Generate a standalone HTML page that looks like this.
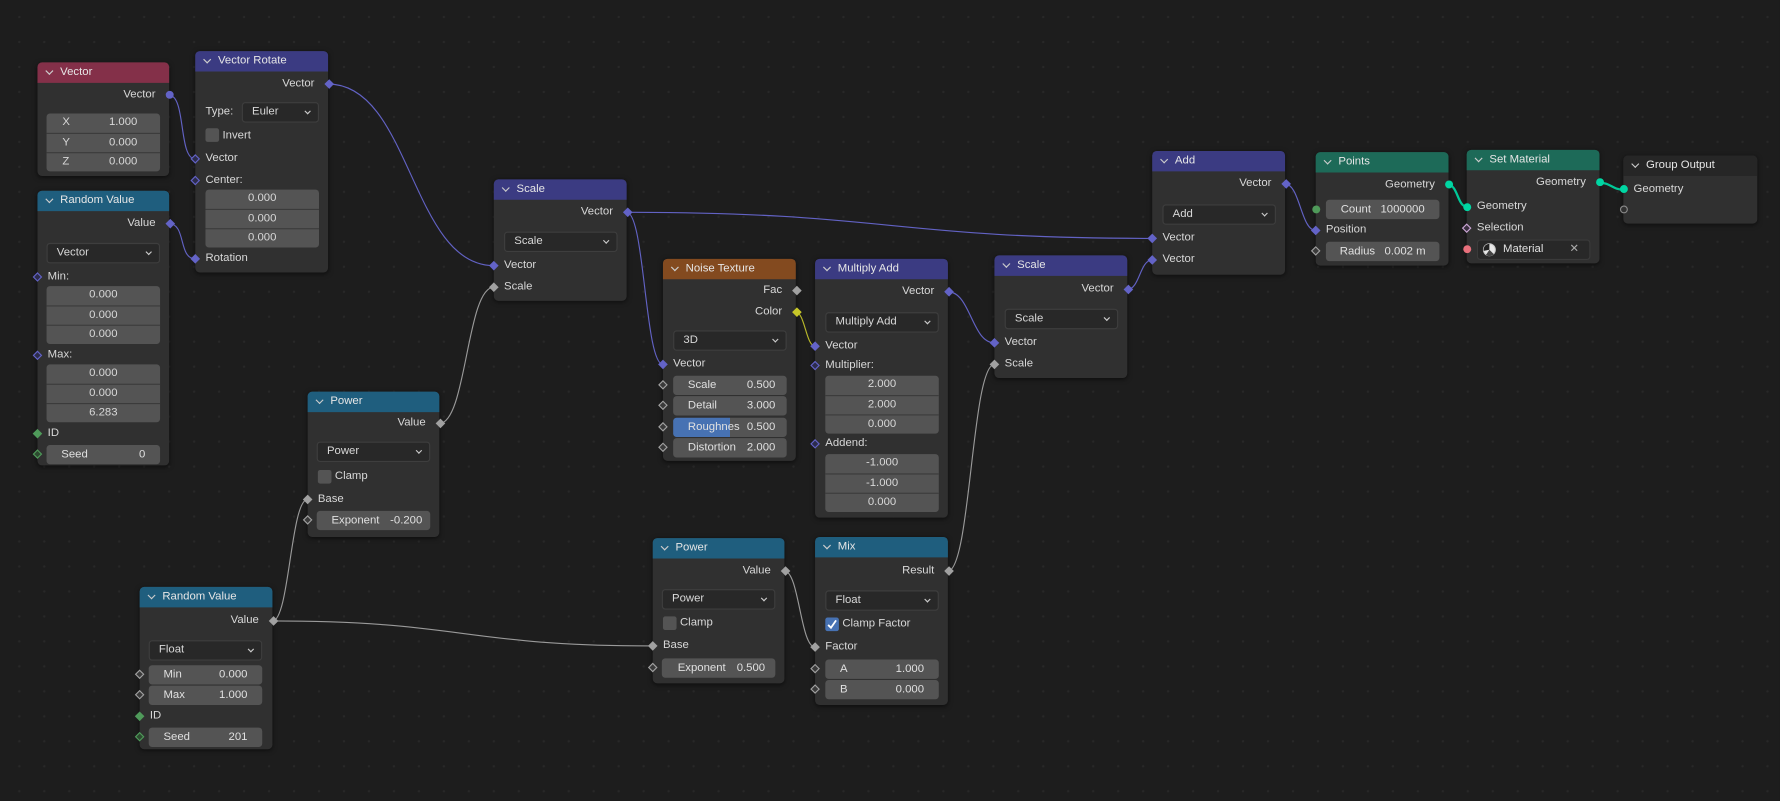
<!DOCTYPE html>
<html><head><meta charset="utf-8"><style>
html,body{margin:0;padding:0;width:1780px;height:801px;overflow:hidden;background:#1d1d1d}
#w{position:absolute;left:0;top:0;width:1568px;height:706px;transform:scale(1.13520);transform-origin:0 0;
background-color:#1d1d1d;background-image:radial-gradient(circle,#282828 0.9px,transparent 1.2px);background-size:22px 22px;background-position:6px 4px;
font-family:"Liberation Sans","DejaVu Sans",sans-serif;font-size:10px;color:#d8d8d8}
svg.l{position:absolute;left:0;top:0}
.n{position:absolute;background:#303030;border-radius:4px;box-shadow:0 1px 4px rgba(0,0,0,.55)}
.h{position:absolute;left:0;top:0;right:0;height:18px;border-radius:4px 4px 0 0;line-height:18px;padding-left:20px;color:#e6e6e6;font-size:10px}
.h:before{content:"";position:absolute;left:8px;top:5px;width:4px;height:4px;border-right:1.1px solid #ccc;border-bottom:1.1px solid #ccc;transform:rotate(45deg)}
.t{position:absolute;height:14px;line-height:14px;white-space:nowrap}
.r{right:12px}.lf{left:9px}
.f{position:absolute;left:8px;width:100px;height:17px;background:#545454;border-radius:3px;line-height:17px;color:#e0e0e0;overflow:hidden;white-space:nowrap}
.f .a{position:absolute;left:13px}.f .b{position:absolute;right:13px}
.fs{position:absolute;left:8px;width:100px;background:#545454;border-radius:3px;overflow:hidden}
.fs div{height:16px;line-height:16px;text-align:center;border-top:1px solid #3b3b3b;position:relative}
.fs div:first-child{border-top:none;height:17px}
.fs .a{position:absolute;left:14px}.fs .b{position:absolute;right:20px}
.d{position:absolute;left:8px;height:16px;background:#282828;border:1px solid #3e3e3e;border-radius:3px;line-height:16px;padding-left:8px;box-sizing:content-box;width:90px}
.d:after{content:"";position:absolute;right:7px;top:5px;width:3px;height:3px;border-right:1px solid #ccc;border-bottom:1px solid #ccc;transform:rotate(45deg)}
.cb{position:absolute;left:9px;width:12px;height:12px;background:#545454;border-radius:2px}
.s{position:absolute;width:6px;height:6px;transform:rotate(45deg)}
.c{position:absolute;width:7px;height:7px;border-radius:50%}
.R{right:-3.5px}.L{left:-3.5px}
.v{background:#6363c7}.g{background:#a1a1a1}.i{background:#4f9a5a}.y{background:#c7c729}.geo{background:#00d6a3}
.hv{box-sizing:border-box;border:1.5px solid #6363c7;background:#2c2c4c}
.hg{box-sizing:border-box;border:1.5px solid #a1a1a1;background:#3a3a3a}
.hi{box-sizing:border-box;border:1.5px solid #4f9a5a;background:#2d4a30}
.hp{box-sizing:border-box;border:1.5px solid #cca6d6;background:#3a3040}
</style></head><body><div id="w">
<svg class="l" width="1568" height="706" fill="none">
<g stroke="#6262c4" stroke-width="1">
<path d="M149 84 C164 84,157 140,172 140"/>
<path d="M149 197 C164 197,157 228,172 228"/>
<path d="M289 74 C362 74,362 234,435 234"/>
<path d="M552 187 C568 187,568 321,584 321"/>
<path d="M552 187 C783 187,784 210,1015 210"/>
<path d="M835 257 C855 257,856 302,876 302"/>
<path d="M993 255 C1004 255,1004 229,1015 229"/>
<path d="M1132 162 C1145 162,1146 203,1159 203"/>
</g>
<g stroke="#9a9a9a" stroke-width="1">
<path d="M387 373 C411 373,411 253,435 253"/>
<path d="M240 547 C255 547,256 440,271 440"/>
<path d="M240 547 C407 547,408 569,575 569"/>
<path d="M691 503 C704 503,705 570,718 570"/>
<path d="M835 503 C855 503,856 321,876 321"/>
</g>
<path d="M701 275 C709 275,710 305,718 305" stroke="#b8b82a" stroke-width="1"/>
<g stroke="#00c898" stroke-width="2">
<path d="M1276 163 C1284 163,1284 182,1292 182"/>
<path d="M1409 161 C1419 161,1420 167,1430 167"/>
</g>
</svg>

<div class="n" style="left:33px;top:55px;width:116px;height:100px">
<div class="h" style="background:#843049">Vector</div>
<div class="t r" style="top:22px">Vector</div><div class="c v R" style="top:25px"></div>
<div class="fs" style="top:45px"><div><span class="a">X</span><span class="b">1.000</span></div><div><span class="a">Y</span><span class="b">0.000</span></div><div><span class="a">Z</span><span class="b">0.000</span></div></div>
</div>

<div class="n" style="left:172px;top:45px;width:117px;height:195px">
<div class="h" style="background:#3b3b82">Vector Rotate</div>
<div class="t r" style="top:22px">Vector</div><div class="s v R" style="top:26px"></div>
<div class="t lf" style="top:47px">Type:</div>
<div class="d" style="left:41px;width:58px;top:45px">Euler</div>
<div class="cb" style="top:68px"></div><div class="t" style="left:24px;top:68px">Invert</div>
<div class="t lf" style="top:88px">Vector</div><div class="s hv L" style="top:92px"></div>
<div class="t lf" style="top:107px">Center:</div><div class="s hv L" style="top:111px"></div>
<div class="fs" style="left:9px;top:122px"><div>0.000</div><div>0.000</div><div>0.000</div></div>
<div class="t lf" style="top:176px">Rotation</div><div class="s v L" style="top:180px"></div>
</div>

<div class="n" style="left:33px;top:168px;width:116px;height:242px">
<div class="h" style="background:#1f5e7e">Random Value</div>
<div class="t r" style="top:22px">Value</div><div class="s v R" style="top:26px"></div>
<div class="d" style="top:46px">Vector</div>
<div class="t lf" style="top:69px">Min:</div><div class="s hv L" style="top:73px"></div>
<div class="fs" style="top:84px"><div>0.000</div><div>0.000</div><div>0.000</div></div>
<div class="t lf" style="top:138px">Max:</div><div class="s hv L" style="top:142px"></div>
<div class="fs" style="top:153px"><div>0.000</div><div>0.000</div><div>6.283</div></div>
<div class="t lf" style="top:207px">ID</div><div class="s i L" style="top:211px"></div>
<div class="f" style="top:224px"><span class="a">Seed</span><span class="b">0</span></div><div class="s hi L" style="top:229px"></div>
</div>

<div class="n" style="left:435px;top:158px;width:117px;height:107px">
<div class="h" style="background:#3b3b82">Scale</div>
<div class="t r" style="top:22px">Vector</div><div class="s v R" style="top:26px"></div>
<div class="d" style="left:9px;top:46px">Scale</div>
<div class="t lf" style="top:69px">Vector</div><div class="s v L" style="top:73px"></div>
<div class="t lf" style="top:88px">Scale</div><div class="s g L" style="top:92px"></div>
</div>

<div class="n" style="left:271px;top:345px;width:116px;height:128px">
<div class="h" style="background:#1f5e7e">Power</div>
<div class="t r" style="top:21px">Value</div><div class="s g R" style="top:25px"></div>
<div class="d" style="top:44px">Power</div>
<div class="cb" style="top:69px"></div><div class="t" style="left:24px;top:68px">Clamp</div>
<div class="t lf" style="top:88px">Base</div><div class="s g L" style="top:92px"></div>
<div class="f" style="top:105px"><span class="a">Exponent</span><span class="b" style="right:7px">-0.200</span></div><div class="s hg L" style="top:110px"></div>
</div>

<div class="n" style="left:123px;top:517px;width:117px;height:143px">
<div class="h" style="background:#1f5e7e">Random Value</div>
<div class="t r" style="top:23px">Value</div><div class="s g R" style="top:27px"></div>
<div class="d" style="top:47px">Float</div>
<div class="f" style="top:69px"><span class="a">Min</span><span class="b">0.000</span></div><div class="s hg L" style="top:74px"></div>
<div class="f" style="top:87px"><span class="a">Max</span><span class="b">1.000</span></div><div class="s hg L" style="top:92px"></div>
<div class="t lf" style="top:107px">ID</div><div class="s i L" style="top:111px"></div>
<div class="f" style="top:124px"><span class="a">Seed</span><span class="b">201</span></div><div class="s hi L" style="top:129px"></div>
</div>

<div class="n" style="left:584px;top:228px;width:117px;height:178px">
<div class="h" style="background:#834a1f">Noise Texture</div>
<div class="t r" style="top:21px">Fac</div><div class="s g R" style="top:25px"></div>
<div class="t r" style="top:40px">Color</div><div class="s y R" style="top:44px"></div>
<div class="d" style="left:9px;top:63px">3D</div>
<div class="t lf" style="top:86px">Vector</div><div class="s v L" style="top:90px"></div>
<div class="f" style="left:9px;top:103px"><span class="a">Scale</span><span class="b" style="right:10px">0.500</span></div><div class="s hg L" style="top:108px"></div>
<div class="f" style="left:9px;top:121px"><span class="a">Detail</span><span class="b" style="right:10px">3.000</span></div><div class="s hg L" style="top:126px"></div>
<div class="f" style="left:9px;top:140px;background:linear-gradient(90deg,#4772b3 0 50%,#545454 50%)"><span class="a">Roughnes</span><span class="b" style="right:10px">0.500</span></div><div class="s hg L" style="top:145px"></div>
<div class="f" style="left:9px;top:158px"><span class="a">Distortion</span><span class="b" style="right:10px">2.000</span></div><div class="s hg L" style="top:163px"></div>
</div>

<div class="n" style="left:718px;top:228px;width:117px;height:228px">
<div class="h" style="background:#3b3b82">Multiply Add</div>
<div class="t r" style="top:22px">Vector</div><div class="s v R" style="top:26px"></div>
<div class="d" style="left:9px;top:47px">Multiply Add</div>
<div class="t lf" style="top:70px">Vector</div><div class="s v L" style="top:74px"></div>
<div class="t lf" style="top:87px">Multiplier:</div><div class="s hv L" style="top:91px"></div>
<div class="fs" style="left:9px;top:103px"><div>2.000</div><div>2.000</div><div>0.000</div></div>
<div class="t lf" style="top:156px">Addend:</div><div class="s hv L" style="top:160px"></div>
<div class="fs" style="left:9px;top:172px"><div>-1.000</div><div>-1.000</div><div>0.000</div></div>
</div>

<div class="n" style="left:876px;top:225px;width:117px;height:108px">
<div class="h" style="background:#3b3b82">Scale</div>
<div class="t r" style="top:23px">Vector</div><div class="s v R" style="top:27px"></div>
<div class="d" style="left:9px;top:47px">Scale</div>
<div class="t lf" style="top:70px">Vector</div><div class="s v L" style="top:74px"></div>
<div class="t lf" style="top:89px">Scale</div><div class="s g L" style="top:93px"></div>
</div>

<div class="n" style="left:575px;top:474px;width:116px;height:128px">
<div class="h" style="background:#1f5e7e">Power</div>
<div class="t r" style="top:22px">Value</div><div class="s g R" style="top:26px"></div>
<div class="d" style="top:45px">Power</div>
<div class="cb" style="top:69px"></div><div class="t" style="left:24px;top:68px">Clamp</div>
<div class="t lf" style="top:88px">Base</div><div class="s g L" style="top:92px"></div>
<div class="f" style="top:106px"><span class="a" style="left:14px">Exponent</span><span class="b" style="right:9px">0.500</span></div><div class="s hg L" style="top:111px"></div>
</div>

<div class="n" style="left:718px;top:473px;width:117px;height:148px">
<div class="h" style="background:#1f5e7e">Mix</div>
<div class="t r" style="top:23px">Result</div><div class="s g R" style="top:27px"></div>
<div class="d" style="left:9px;top:47px">Float</div>
<div class="cb" style="top:71px;background:#4772b3"><svg width="12" height="12" style="position:absolute;left:0;top:0"><path d="M2.5 6.5 L5 9 L9.5 2.5" stroke="#fff" stroke-width="1.6" fill="none"/></svg></div>
<div class="t" style="left:24px;top:70px">Clamp Factor</div>
<div class="t lf" style="top:90px">Factor</div><div class="s g L" style="top:94px"></div>
<div class="f" style="left:9px;top:108px"><span class="a">A</span><span class="b">1.000</span></div><div class="s hg L" style="top:113px"></div>
<div class="f" style="left:9px;top:126px"><span class="a">B</span><span class="b">0.000</span></div><div class="s hg L" style="top:131px"></div>
</div>

<div class="n" style="left:1015px;top:133px;width:117px;height:109px">
<div class="h" style="background:#3b3b82">Add</div>
<div class="t r" style="top:22px">Vector</div><div class="s v R" style="top:26px"></div>
<div class="d" style="left:9px;top:47px">Add</div>
<div class="t lf" style="top:70px">Vector</div><div class="s v L" style="top:74px"></div>
<div class="t lf" style="top:89px">Vector</div><div class="s v L" style="top:93px"></div>
</div>

<div class="n" style="left:1159px;top:134px;width:117px;height:100px">
<div class="h" style="background:#1d6a58">Points</div>
<div class="t r" style="top:22px">Geometry</div><div class="c geo R" style="top:25px"></div>
<div class="f" style="left:9px;top:42px;text-align:center">Count&nbsp;&nbsp;&nbsp;1000000</div><div class="c i L" style="top:47px"></div>
<div class="t lf" style="top:62px">Position</div><div class="s v L" style="top:66px"></div>
<div class="f" style="left:9px;top:79px;text-align:center">Radius&nbsp;&nbsp;&nbsp;0.002 m</div><div class="s hg L" style="top:84px"></div>
</div>

<div class="n" style="left:1292px;top:132px;width:117px;height:100px">
<div class="h" style="background:#1d6a58">Set Material</div>
<div class="t r" style="top:22px">Geometry</div><div class="c geo R" style="top:25px"></div>
<div class="t lf" style="top:43px">Geometry</div><div class="c geo L" style="top:47px"></div>
<div class="t lf" style="top:62px">Selection</div><div class="s hp L" style="top:66px"></div>
<div class="f" style="left:9px;top:79px;background:#282828;border:1px solid #3a3a3a;width:98px;height:16px;line-height:16px">
<svg width="12" height="12" style="position:absolute;left:4px;top:2px"><circle cx="6" cy="6" r="5.2" fill="#e8e8e8" stroke="#ccc"/><path d="M6 0.8 A5.2 5.2 0 0 0 1 7 L6 6 Z" fill="#222"/><path d="M6 6 L10 10 A5.2 5.2 0 0 1 3 10.5 Z" fill="#444"/></svg>
<span style="position:absolute;left:22px">Material</span><span style="position:absolute;right:9px;color:#aaa">✕</span></div>
<div class="c L" style="top:84px;background:#e8707c"></div>
</div>

<div class="n" style="left:1430px;top:137px;width:118px;height:60px">
<div class="h" style="background:#262626">Group Output</div>
<div class="t lf" style="top:23px">Geometry</div><div class="c geo L" style="top:26px"></div>
<div class="c L" style="top:44px;box-sizing:border-box;border:1.5px solid #8a8a8a;background:#303030"></div>
</div>
</div></body></html>
